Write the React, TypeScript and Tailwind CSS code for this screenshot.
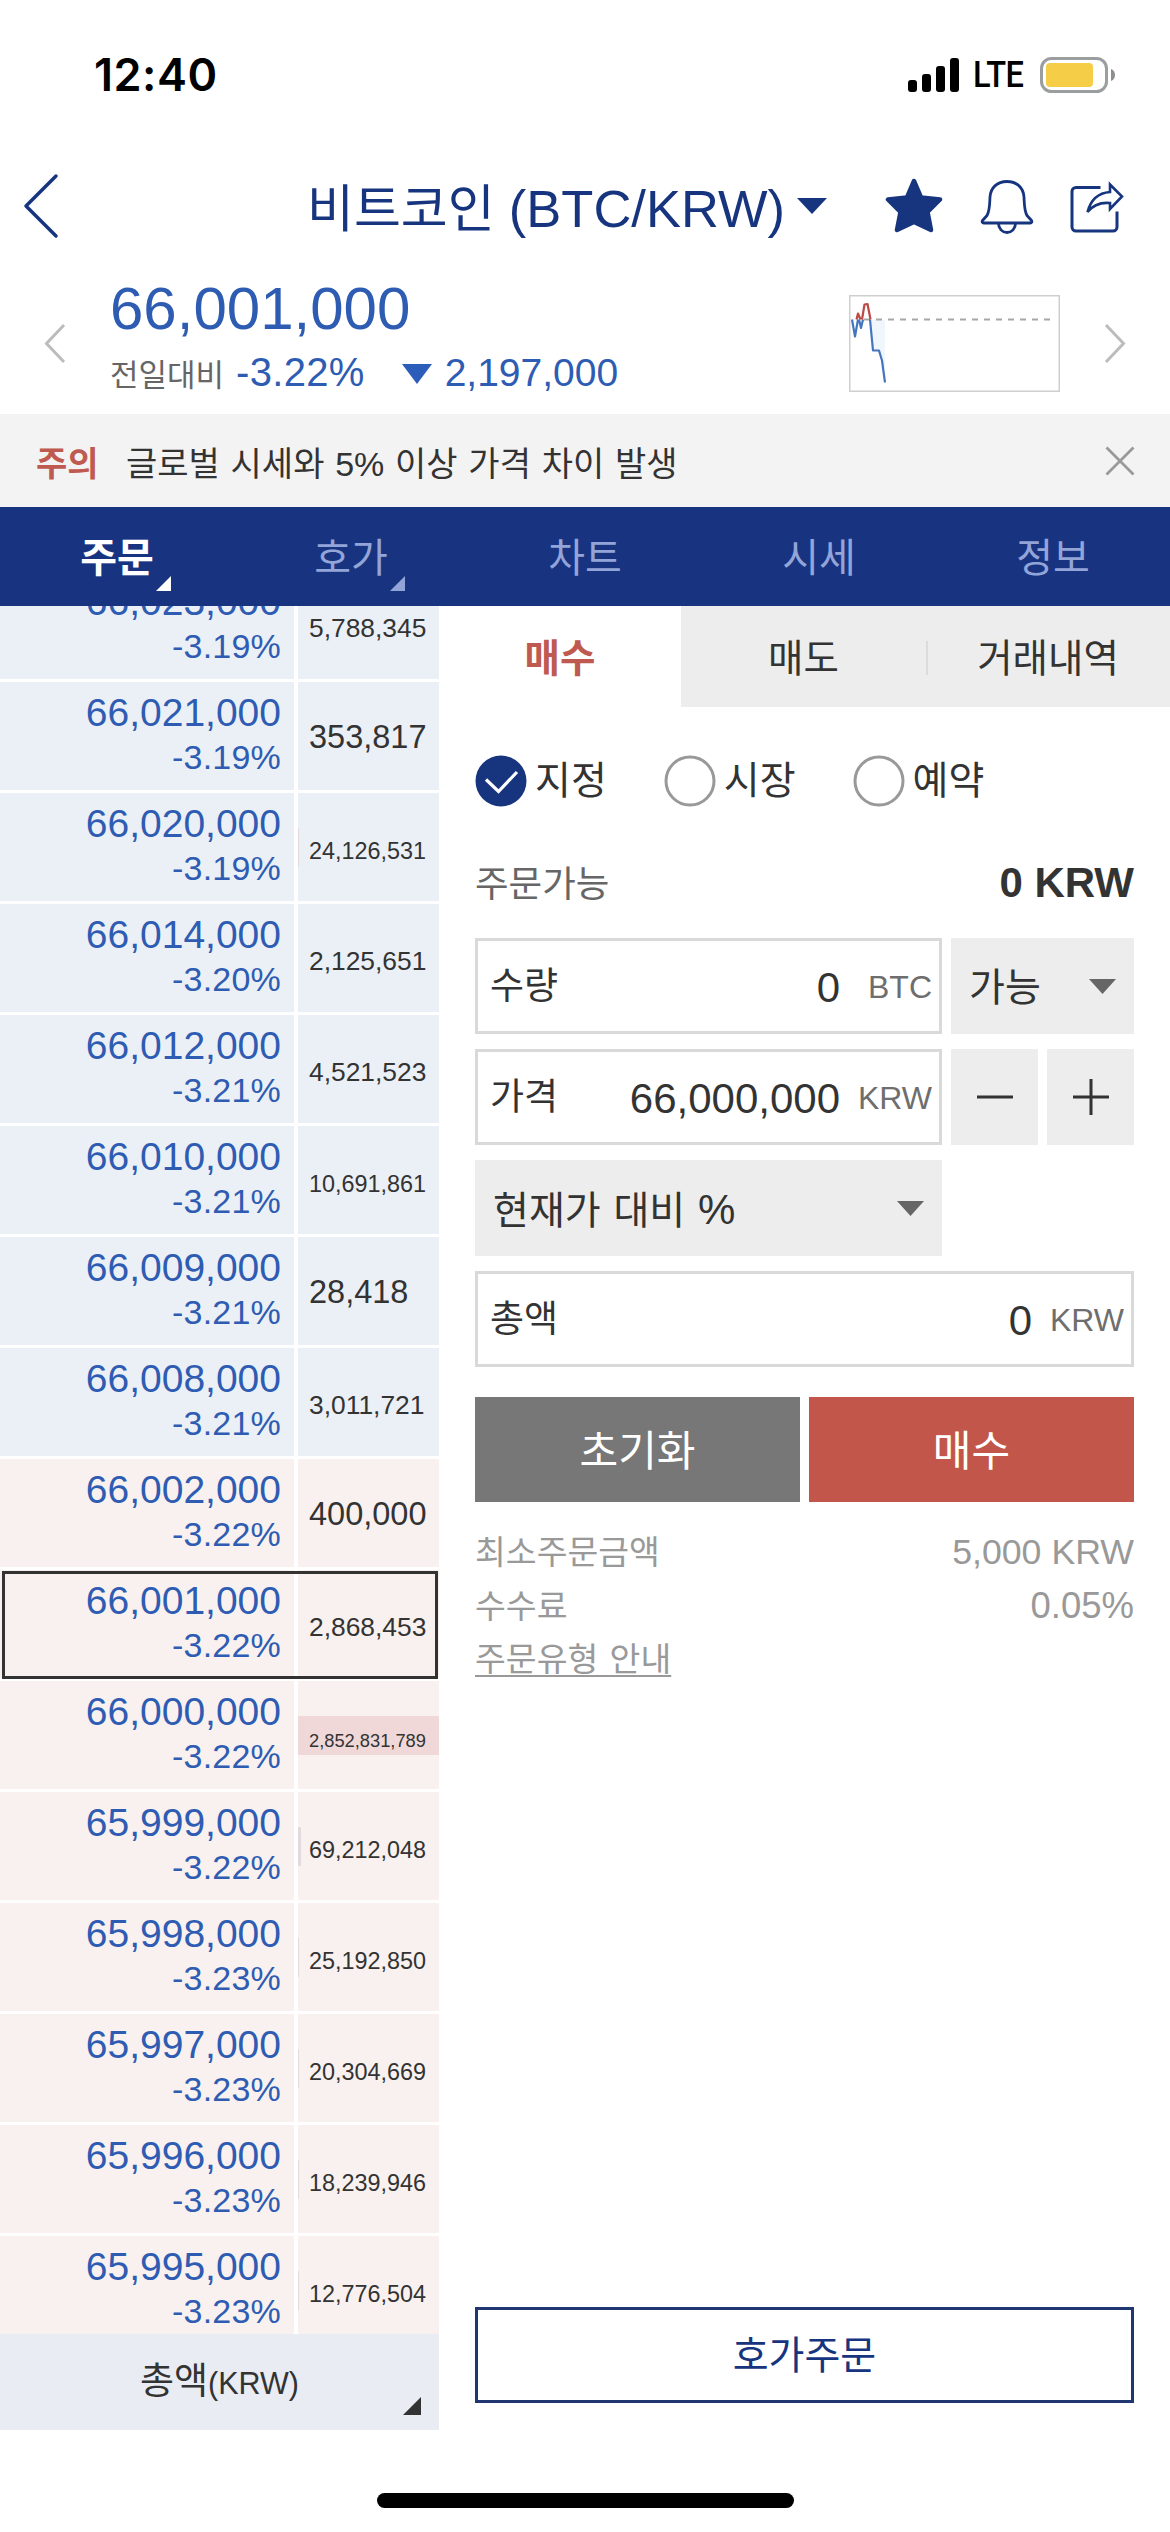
import { useState } from 'react';
import clsx from 'clsx';

type Side = 'ask' | 'bid';

interface BookRow {
  price: string;
  rate: string;
  amount: string;
  side: Side;
  // width of the volume bar in px
  bar?: number;
  current?: boolean;
}

const BOOK: BookRow[] = [
  { price: '66,023,000', rate: '-3.19%', amount: '5,788,345', side: 'ask' },
  { price: '66,021,000', rate: '-3.19%', amount: '353,817', side: 'ask' },
  { price: '66,020,000', rate: '-3.19%', amount: '24,126,531', side: 'ask', bar: 1 },
  { price: '66,014,000', rate: '-3.20%', amount: '2,125,651', side: 'ask' },
  { price: '66,012,000', rate: '-3.21%', amount: '4,521,523', side: 'ask' },
  { price: '66,010,000', rate: '-3.21%', amount: '10,691,861', side: 'ask' },
  { price: '66,009,000', rate: '-3.21%', amount: '28,418', side: 'ask' },
  { price: '66,008,000', rate: '-3.21%', amount: '3,011,721', side: 'ask' },
  { price: '66,002,000', rate: '-3.22%', amount: '400,000', side: 'bid' },
  { price: '66,001,000', rate: '-3.22%', amount: '2,868,453', side: 'bid', current: true },
  { price: '66,000,000', rate: '-3.22%', amount: '2,852,831,789', side: 'bid', bar: 141 },
  { price: '65,999,000', rate: '-3.22%', amount: '69,212,048', side: 'bid', bar: 3 },
  { price: '65,998,000', rate: '-3.23%', amount: '25,192,850', side: 'bid', bar: 1 },
  { price: '65,997,000', rate: '-3.23%', amount: '20,304,669', side: 'bid', bar: 1 },
  { price: '65,996,000', rate: '-3.23%', amount: '18,239,946', side: 'bid', bar: 1 },
  { price: '65,995,000', rate: '-3.23%', amount: '12,776,504', side: 'bid', bar: 1 },
];

const NAV_TABS = ['주문', '호가', '차트', '시세', '정보'];
const ORDER_TABS = ['매수', '매도', '거래내역'];
const ORDER_TYPES = ['지정', '시장', '예약'];

// long amounts shrink so they always fit the column
function amountSize(amount: string) {
  if (amount.length > 10) return 'text-[18.3px]';
  if (amount.length > 9) return 'text-[23.4px]';
  if (amount.length > 7) return 'text-[26.4px]';
  return 'text-[32.5px]';
}

function StatusBar() {
  return (
    <div className="flex h-[150px] items-center justify-between pl-[94px] pr-[54px]">
      <span className="font-[Inter] text-[45px] leading-[48px] font-semibold tracking-[0.5px] text-black">12:40</span>
      <div className="flex items-center">
        <svg width="52" height="36" viewBox="0 0 52 36">
          <rect x="0" y="23" width="9" height="12" rx="3" />
          <rect x="14" y="17" width="9" height="18" rx="3" />
          <rect x="28" y="9" width="9" height="26" rx="3" />
          <rect x="42" y="1" width="9" height="34" rx="3" />
        </svg>
        <span className="ml-[13px] w-[67px] origin-left scale-x-[0.88] font-[Roboto] text-[37px] leading-[40px] font-medium tracking-[-0.5px] text-black">LTE</span>
        <svg width="76" height="38" viewBox="0 0 76 38">
          <rect x="1.5" y="2.5" width="65" height="33" rx="10" fill="none" stroke="#9b9e9e" strokeWidth="3" />
          <rect x="6" y="7" width="47" height="24" rx="4" fill="#f6cd46" />
          <path d="M71 13c3 1 4 3.500 4 6s-1 5-4 6z" fill="#8e8e8e" />
        </svg>
      </div>
    </div>
  );
}

function Header() {
  return (
    <div className="flex h-[112px] items-center pl-[22px] pr-[45px] text-[#17357f]">
      <svg width="38" height="68" viewBox="0 0 38 68" fill="none" stroke="currentColor" strokeWidth="3.5" strokeLinecap="round" strokeLinejoin="round">
        <path d="M34 4L4 34l30 30" />
      </svg>
      <h1 className="ml-[247px] pt-[6px] text-[51px] leading-[60px] whitespace-nowrap">
        비트코인 <span className="text-[52.5px]">(BTC/KRW)</span>
      </h1>
      <svg className="ml-[12px]" width="30" height="16" viewBox="0 0 30 16" fill="currentColor">
        <path d="M0 0h30L15 16z" />
      </svg>
      <div className="ml-auto flex items-center">
        <svg width="58" height="56" viewBox="0 0 58 56" fill="currentColor" stroke="currentColor" strokeWidth="4.500" strokeLinejoin="round">
          <path d="M29 3l7 16.500 19 2-12.500 12.500L46 52l-17-8-17 8 3.500-18L3 21.500l19-2z" />
        </svg>
        <svg className="ml-[37px]" width="54" height="56" viewBox="0 0 54 56" fill="none" stroke="currentColor" strokeWidth="2.800" strokeLinejoin="round">
          <path d="M27 3.500C17 3.500 10.500 10 10 19c-.4 9-.3 14-3 18.500L2.500 42.500c-.8 1.200-.2 2.500 1.200 2.500h46.600c1.400 0 2-1.300 1.200-2.500L47 37.500C44.300 33 44.400 28 44 19 43.500 10 37 3.500 27 3.500z" />
          <path d="M18.500 45.500c0 5 3.700 9 8.500 9s8.500-4 8.500-9" />
        </svg>
        <svg className="ml-[34px]" width="57" height="56" viewBox="0 0 57 56" fill="none" stroke="currentColor" strokeWidth="3">
          <path d="M32.500 9.500H8a4 4 0 0 0-4 4V49a4 4 0 0 0 4 4h37a4 4 0 0 0 4-4V33.500" />
          <path d="M42 6.500L54 18.500 42 31v-6c-9-.8-17 2-22.500 9C22.500 22.500 29.500 15 42 14z" strokeWidth="2.600" />
        </svg>
      </div>
    </div>
  );
}

function MiniChart() {
  return (
    <svg width="211" height="97" viewBox="0 0 211 97" fill="none">
      <rect x=".75" y=".75" width="209.500" height="95.500" stroke="#cfcfcf" strokeWidth="1.500" />
      <path d="M21 25h15v50l-5-18-8-2z" fill="#f1f6fc" />
      <path d="M15 24.500h187" stroke="#a8a8a8" strokeWidth="2" strokeDasharray="6 6" />
      <g strokeWidth="2.200" strokeLinejoin="round">
        <path d="M3 24.500l3 17 3-17M10 24.500l2 8.500 2-8.500M21 24.500l3 31h6l3 10 3 22" stroke="#4675c0" />
        <path d="M7.500 24.500l1.500-6 2.500 6M13 24.500l2.500-15 3-.5 3 15.500" stroke="#bb4a45" />
      </g>
    </svg>
  );
}

function PriceSummary() {
  return (
    <div className="flex h-[152px] justify-between pl-[44px] pr-[44px]">
      <svg className="mt-[61px]" width="22" height="41" viewBox="0 0 22 41" fill="none" stroke="#bcbcbc" strokeWidth="3">
        <path d="M20 2L2.500 20.500 20 39" />
      </svg>
      <div className="ml-[44px] flex-1 pt-[17px] text-[#2f5cb3]">
        <div className="text-[60px] leading-[60px]">66,001,000</div>
        <div className="mt-[9px] flex items-baseline text-[39px] leading-[48px]">
          <span className="text-[31px] text-[#666]">전일대비</span>
          <span className="ml-[12px] text-[40px] tracking-[0.3px]">-3.22%</span>
          <svg className="ml-[37px] self-center" width="30" height="20" viewBox="0 0 30 20" fill="#2d5dba">
            <path d="M0 0h30L15 20z" />
          </svg>
          <span className="ml-[13px]">2,197,000</span>
        </div>
      </div>
      <div className="mt-[33px] mr-[44px]">
        <MiniChart />
      </div>
      <svg className="mt-[61px]" width="22" height="41" viewBox="0 0 22 41" fill="none" stroke="#bcbcbc" strokeWidth="3">
        <path d="M2 2l17.500 18.500L2 39" />
      </svg>
    </div>
  );
}

function Notice() {
  return (
    <div className="flex h-[93px] items-center bg-[#f3f3f3] pl-[36px] pr-[35px] text-[34px] text-[#333]">
      <span className="w-[90px] pt-[8px] font-bold text-[#bf5a50]">주의</span>
      <span className="pt-[8px] [word-spacing:1.3px]">글로벌 시세와 5% 이상 가격 차이 발생</span>
      <svg className="ml-auto" width="30" height="30" viewBox="0 0 30 30" stroke="#999" strokeWidth="2.800">
        <path d="M1.500 1.500l27 27M28.500 1.500l-27 27" />
      </svg>
    </div>
  );
}

function Corner({ className }: { className: string }) {
  return (
    <svg className={className} viewBox="0 0 16 16" fill="currentColor">
      <path d="M16 0v16H0z" />
    </svg>
  );
}

function NavTabs() {
  const [active, setActive] = useState(0);
  return (
    <nav className="grid h-[99px] grid-cols-5 bg-[#183481] text-[40px]">
      {NAV_TABS.map((tab, i) => (
        <button
          key={tab}
          onClick={() => setActive(i)}
          className={clsx('relative pt-[2px]', i === active ? 'font-bold text-white' : 'text-[#93a5d8]')}
        >
          {tab}
          {i < 2 && <Corner className="absolute top-[69px] left-[156px] size-[15px]" />}
        </button>
      ))}
    </nav>
  );
}

function OrderBook() {
  return (
    <div className="flex w-[439px] flex-col">
      <div className="h-[1728px] overflow-hidden">
        <div className="-mt-[35px]">
          {BOOK.map((row) => (
            <div key={row.price} className="relative mb-[3px] grid h-[108px] grid-cols-[294px_141px] grid-rows-[108px] gap-x-[4px]">
              <div className={clsx('pt-[10px] pr-[13px] text-right text-[#2f5cb3]', row.side === 'ask' ? 'bg-[#ebf0f6]' : 'bg-[#f8f1ef]')}>
                <div className="text-[39px] leading-[42px]">{row.price}</div>
                <div className="text-[34px] leading-[46px] tracking-[0.2px]">{row.rate}</div>
              </div>
              <div className={clsx('relative pl-[11px] text-[33px] leading-[109px] text-[#333]', row.side === 'ask' ? 'bg-[#ebf0f6]' : 'bg-[#f8f1ef]')}>
                {row.bar && (
                  <div
                    className={clsx('absolute top-[35px] left-0 h-[39px]', row.bar > 100 ? 'bg-[#efd8d7]' : 'bg-[#e3dadd]')}
                    style={{ width: row.bar }}
                  />
                )}
                <span className={clsx('relative', amountSize(row.amount))}>{row.amount}</span>
              </div>
              {row.current && <div className="absolute top-px left-[2px] h-[108px] w-[436px] border-[3px] border-[#333]" />}
            </div>
          ))}
        </div>
      </div>
      <button className="relative h-[96px] bg-[#e9ecf2] text-[37px] text-[#333]">
        총액<span className="text-[30.5px]">(KRW)</span>
        <Corner className="absolute right-[18px] bottom-[15px] size-[18px]" />
      </button>
    </div>
  );
}

function Caret() {
  return (
    <svg width="27" height="15" viewBox="0 0 27 15" fill="#666">
      <path d="M0 0h27L13.500 15z" />
    </svg>
  );
}

function Field({ label, value, unit, className }: { label: string; value: string; unit: string; className: string }) {
  return (
    <div className={clsx('flex h-[96px] items-center border-[3px] border-[#d9d9d9] pt-[2px] pr-[7px] pl-[12px] text-[#333]', className)}>
      <span className="text-[37px]">{label}</span>
      <span className="ml-auto text-[42px]">{value}</span>
      <span className="w-[92px] text-right text-[32px] text-[#6e6e6e]">{unit}</span>
    </div>
  );
}

function OrderForm() {
  const [tab, setTab] = useState(0);
  const [type, setType] = useState(0);

  return (
    <div className="flex flex-1 flex-col text-[#333]">
      <div className="grid h-[101px] grid-cols-[242px_245px_244px] text-[38.5px]">
        {ORDER_TABS.map((name, i) => (
          <button
            key={name}
            onClick={() => setTab(i)}
            className={clsx('relative pt-[5px]', i === tab ? 'bg-white font-bold text-[#bf5a50]' : 'bg-[#ededed]')}
          >
            {name}
            {i === 2 && <span className="absolute top-[35px] left-0 h-[34px] w-[2px] bg-[#dcdcdc]" />}
          </button>
        ))}
      </div>

      <div className="flex flex-1 flex-col pr-[36px] pl-[36px]">
        <div className="mt-[48px] flex h-[51px] gap-[57px]">
          {ORDER_TYPES.map((name, i) => (
            <button key={name} onClick={() => setType(i)} className="flex items-center text-[39px]">
              <svg width="52" height="52" viewBox="0 0 52 52" fill="none">
                {i === type ? (
                  <>
                    <circle cx="26" cy="26" r="25.500" fill="#17347f" />
                    <path d="M11 24.500l12.500 12L42 17" stroke="#fff" strokeWidth="3.200" />
                  </>
                ) : (
                  <circle cx="26" cy="26" r="24" stroke="#999" strokeWidth="3" />
                )}
              </svg>
              <span className="ml-[8px] pt-[2px]">{name}</span>
            </button>
          ))}
        </div>

        <div className="mt-[52px] flex h-[50px] items-baseline justify-between leading-[50px]">
          <span className="text-[36.5px] text-[#666]">주문가능</span>
          <span className="text-[42px] font-bold">0 KRW</span>
        </div>

        <div className="mt-[30px] flex gap-[9px]">
          <Field label="수량" value="0" unit="BTC" className="w-[467px]" />
          <button className="flex h-[96px] flex-1 items-center justify-between bg-[#ededed] pr-[18px] pl-[18px]">
            <span className="pt-[4px] text-[39px]">가능</span>
            <Caret />
          </button>
        </div>
        <div className="mt-[15px] flex gap-[9px]">
          <Field label="가격" value="66,000,000" unit="KRW" className="w-[467px]" />
          <button className="flex flex-1 items-center justify-center bg-[#ededed]">
            <svg width="36" height="36" viewBox="0 0 36 36" stroke="#333" strokeWidth="3">
              <path d="M0 18h36" />
            </svg>
          </button>
          <button className="flex flex-1 items-center justify-center bg-[#ededed]">
            <svg width="36" height="36" viewBox="0 0 36 36" stroke="#333" strokeWidth="3">
              <path d="M0 18h36M18 0v36" />
            </svg>
          </button>
        </div>
        <button className="mt-[15px] flex h-[96px] w-[467px] items-center justify-between bg-[#ededed] pr-[18px] pl-[18px]">
          <span className="pt-[3px] text-[39px] [word-spacing:2px]">
            현재가 대비 <span className="text-[42px]">%</span>
          </span>
          <Caret />
        </button>
        <Field label="총액" value="0" unit="KRW" className="mt-[15px]" />

        <div className="mt-[30px] grid h-[105px] grid-cols-2 gap-[9px] text-[42px] text-white">
          <button className="bg-[#777] pt-[4px]">초기화</button>
          <button className="bg-[#c2564b] pt-[4px]">매수</button>
        </div>

        <div className="mt-[23px] text-[33.5px] leading-[54px] text-[#999]">
          <div className="flex h-[54px] items-baseline justify-between">
            <span>최소주문금액</span>
            <span className="text-[35.7px]">5,000 KRW</span>
          </div>
          <div className="flex h-[54px] items-baseline justify-between">
            <span>수수료</span>
            <span className="text-[36.5px]">0.05%</span>
          </div>
          <a className="underline decoration-2 underline-offset-[4px] [text-decoration-skip-ink:none] [word-spacing:2px]">주문유형 안내</a>
        </div>

        <button className="mt-auto mb-[27px] h-[96px] border-[3px] border-[#1f3670] pt-[2px] text-[39px] text-[#17357f]">호가주문</button>
      </div>
    </div>
  );
}

export default function App() {
  return (
    <div className="flex h-[2532px] w-[1170px] flex-col overflow-hidden bg-white font-['Liberation_Sans','Noto_Sans_CJK_KR',sans-serif]">
      <StatusBar />
      <Header />
      <PriceSummary />
      <Notice />
      <NavTabs />
      <main className="flex h-[1824px]">
        <OrderBook />
        <OrderForm />
      </main>
      <div className="mx-auto mt-[63px] h-[15px] w-[417px] rounded-full bg-black" />
    </div>
  );
}
